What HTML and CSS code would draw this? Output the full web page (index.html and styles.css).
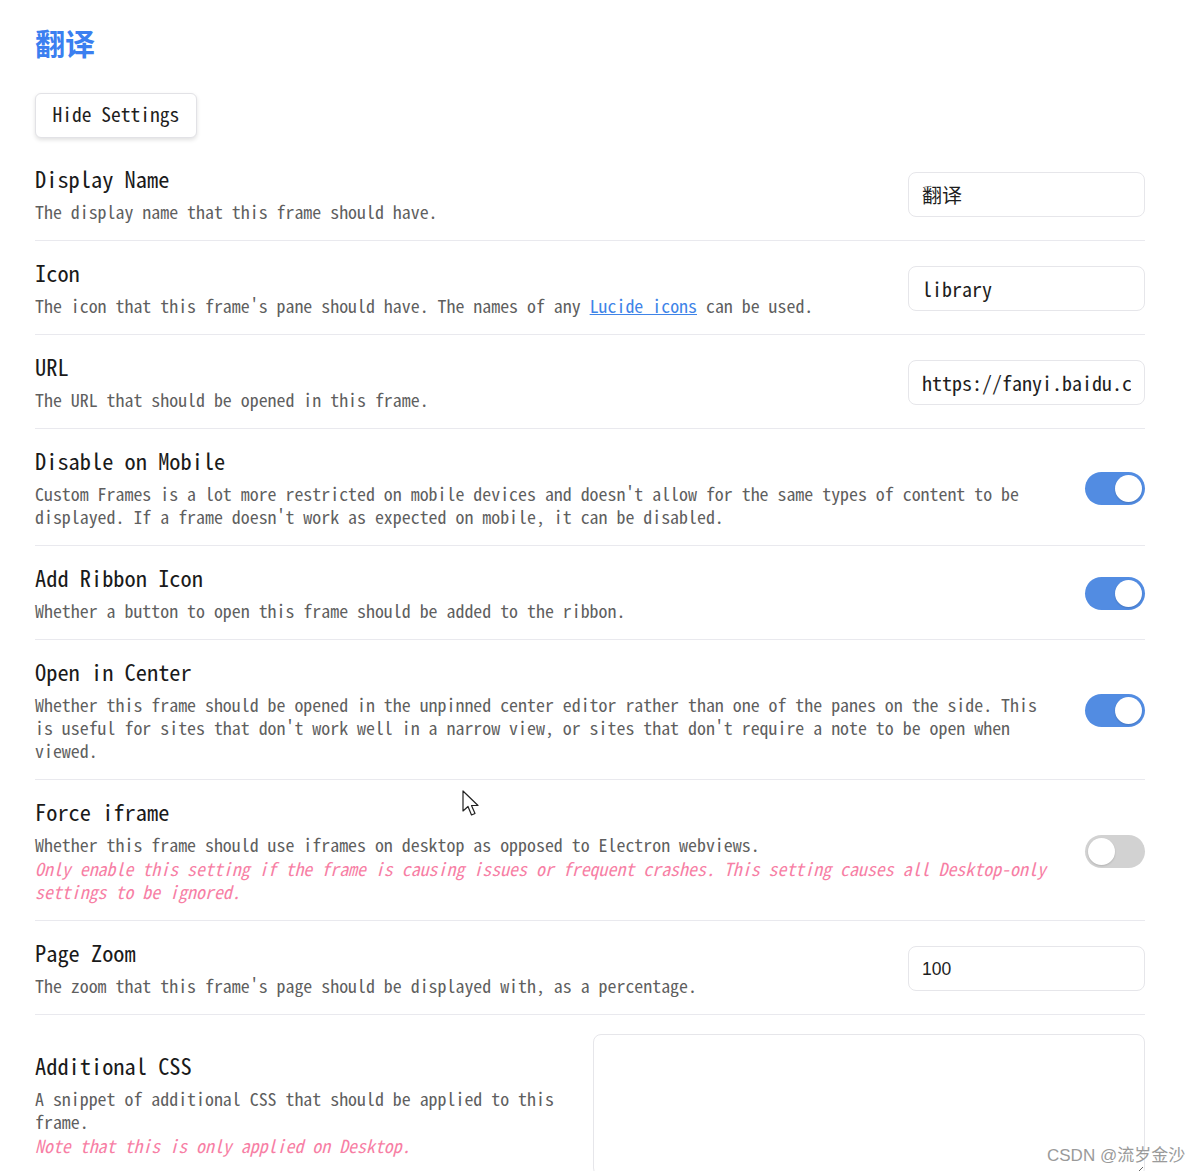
FILE: index.html
```html
<!DOCTYPE html>
<html lang="zh">
<head>
  <meta charset="UTF-8">
  <title>翻译</title>
  <link rel="stylesheet" href="styles.css">
</head>
<body>
  <div class="page">
    <h1 class="frame-title">翻译</h1>
    <button class="hide-btn">Hide Settings</button>

    <div class="setting-item">
      <div class="setting-info">
        <div class="setting-name">Display Name</div>
        <div class="setting-desc">The display name that this frame should have.</div>
      </div>
      <div class="setting-control">
        <input class="text-input" type="text" value="翻译">
      </div>
    </div>

    <div class="setting-item">
      <div class="setting-info">
        <div class="setting-name">Icon</div>
        <div class="setting-desc">The icon that this frame's pane should have. The names of any <a href="#" class="link">Lucide icons</a> can be used.</div>
      </div>
      <div class="setting-control">
        <input class="text-input" type="text" value="library">
      </div>
    </div>

    <div class="setting-item">
      <div class="setting-info">
        <div class="setting-name">URL</div>
        <div class="setting-desc">The URL that should be opened in this frame.</div>
      </div>
      <div class="setting-control">
        <input class="text-input" type="text" value="https://fanyi.baidu.com/">
      </div>
    </div>

    <div class="setting-item">
      <div class="setting-info">
        <div class="setting-name">Disable on Mobile</div>
        <div class="setting-desc">Custom Frames is a lot more restricted on mobile devices and doesn't allow for the same types of content to be displayed. If a frame doesn't work as expected on mobile, it can be disabled.</div>
      </div>
      <div class="setting-control">
        <div class="toggle is-enabled"><span class="knob"></span></div>
      </div>
    </div>

    <div class="setting-item">
      <div class="setting-info">
        <div class="setting-name">Add Ribbon Icon</div>
        <div class="setting-desc">Whether a button to open this frame should be added to the ribbon.</div>
      </div>
      <div class="setting-control">
        <div class="toggle is-enabled"><span class="knob"></span></div>
      </div>
    </div>

    <div class="setting-item">
      <div class="setting-info">
        <div class="setting-name">Open in Center</div>
        <div class="setting-desc">Whether this frame should be opened in the unpinned center editor rather than one of the panes on the side. This is useful for sites that don't work well in a narrow view, or sites that don't require a note to be open when viewed.</div>
      </div>
      <div class="setting-control">
        <div class="toggle is-enabled"><span class="knob"></span></div>
      </div>
    </div>

    <div class="setting-item">
      <div class="setting-info">
        <div class="setting-name">Force iframe</div>
        <div class="setting-desc">
          <div>Whether this frame should use iframes on desktop as opposed to Electron webviews.</div>
          <div class="warning">Only enable this setting if the frame is causing issues or frequent crashes. This setting causes all Desktop-only settings to be ignored.</div>
        </div>
      </div>
      <div class="setting-control">
        <div class="toggle"><span class="knob"></span></div>
      </div>
    </div>

    <div class="setting-item">
      <div class="setting-info">
        <div class="setting-name">Page Zoom</div>
        <div class="setting-desc">The zoom that this frame's page should be displayed with, as a percentage.</div>
      </div>
      <div class="setting-control">
        <input class="text-input number" type="text" value="100">
      </div>
    </div>

    <div class="setting-item">
      <div class="setting-info">
        <div class="setting-name">Additional CSS</div>
        <div class="setting-desc">
          <div>A snippet of additional CSS that should be applied to this frame.</div>
          <div class="warning">Note that this is only applied on Desktop.</div>
        </div>
      </div>
      <div class="setting-control">
        <textarea class="css-area"></textarea>
      </div>
    </div>
  </div>

  <!-- mouse pointer captured in the screenshot -->
  <svg class="pointer" width="22" height="30" viewBox="0 0 22 30">
    <path d="M1 1 L1 21 L6 16.5 L9.5 25 L13 23.5 L9.5 15.5 L16 15.5 Z" fill="#fff" stroke="#222" stroke-width="1.2" stroke-linejoin="round"/>
  </svg>

  <div class="watermark">CSDN @流岁金沙</div>
</body>
</html>
```

FILE: styles.css
```css
* {
  box-sizing: border-box;
}

body {
  margin: 0;
  background: #fff;
  color: #222;
  font-family: "Noto Sans Mono CJK SC", "Noto Sans CJK SC", "Liberation Mono", monospace;
  overflow: hidden;
}

.page {
  padding: 0 53px 0 35px;
}

.frame-title {
  margin: 22px 0 0;
  font-family: "Noto Sans CJK SC", sans-serif;
  font-size: 30px;
  line-height: 40px;
  font-weight: 700;
  color: #3b7ff0;
}

.hide-btn {
  margin-top: 31px;
  margin-bottom: 9px;
  width: 162px;
  height: 45px;
  font-family: inherit;
  font-size: 19.5px;
  line-height: 1;
  padding: 0 0 3px;
  color: #1e1e1e;
  background: #fff;
  border: 1px solid #e2e2e6;
  border-radius: 6px;
  box-shadow: 0 2px 4px rgba(0, 0, 0, 0.12);
}

.setting-item {
  display: flex;
  align-items: center;
  gap: 24px;
  padding: 16px 0 17px;
  border-bottom: 1px solid #e9e9ee;
}

.setting-item:last-child {
  border-bottom: none;
}

.setting-info {
  flex: 1;
  min-width: 0;
}

.setting-name {
  font-size: 22.4px;
  line-height: 30px;
  color: #1a1a1a;
}

.setting-desc {
  margin-top: 7px;
  font-size: 17.9px;
  line-height: 23px;
  color: #5f5f5f;
}

.link {
  color: #3f84e8;
  text-decoration: underline;
}

.warning {
  margin-top: 1px;
  color: #f77fa5;
  font-style: italic;
}

.setting-control {
  flex: none;
  display: flex;
  margin-top: 3px;
}

.text-input {
  width: 237px;
  height: 45px;
  padding: 0 13px;
  font-family: inherit;
  font-size: 20px;
  color: #1e1e1e;
  background: #fff;
  border: 1px solid #e6e6ea;
  border-radius: 8px;
  outline: none;
}

.text-input.number {
  font-family: "Liberation Sans", Arial, sans-serif;
  font-size: 17.5px;
  padding-top: 2px;
}

.toggle {
  position: relative;
  width: 60px;
  height: 33px;
  border-radius: 17px;
  background: #d2d2d2;
}

.toggle.is-enabled {
  background: #528ce2;
}

.knob {
  position: absolute;
  top: 3px;
  left: 3px;
  width: 27px;
  height: 27px;
  border-radius: 50%;
  background: #fff;
  box-shadow: 0 1px 2px rgba(0, 0, 0, 0.15);
}

.toggle.is-enabled .knob {
  left: 30px;
}

.css-area {
  width: 552px;
  height: 142px;
  border: 1px solid #e6e6ea;
  border-radius: 8px;
  resize: vertical;
  outline: none;
}

.pointer {
  position: absolute;
  left: 462px;
  top: 790px;
}

.watermark {
  position: absolute;
  left: 1047px;
  top: 1141px;
  font-family: "Liberation Sans", "Noto Sans CJK SC", sans-serif;
  font-size: 17px;
  color: #9a9a9a;
}
```
